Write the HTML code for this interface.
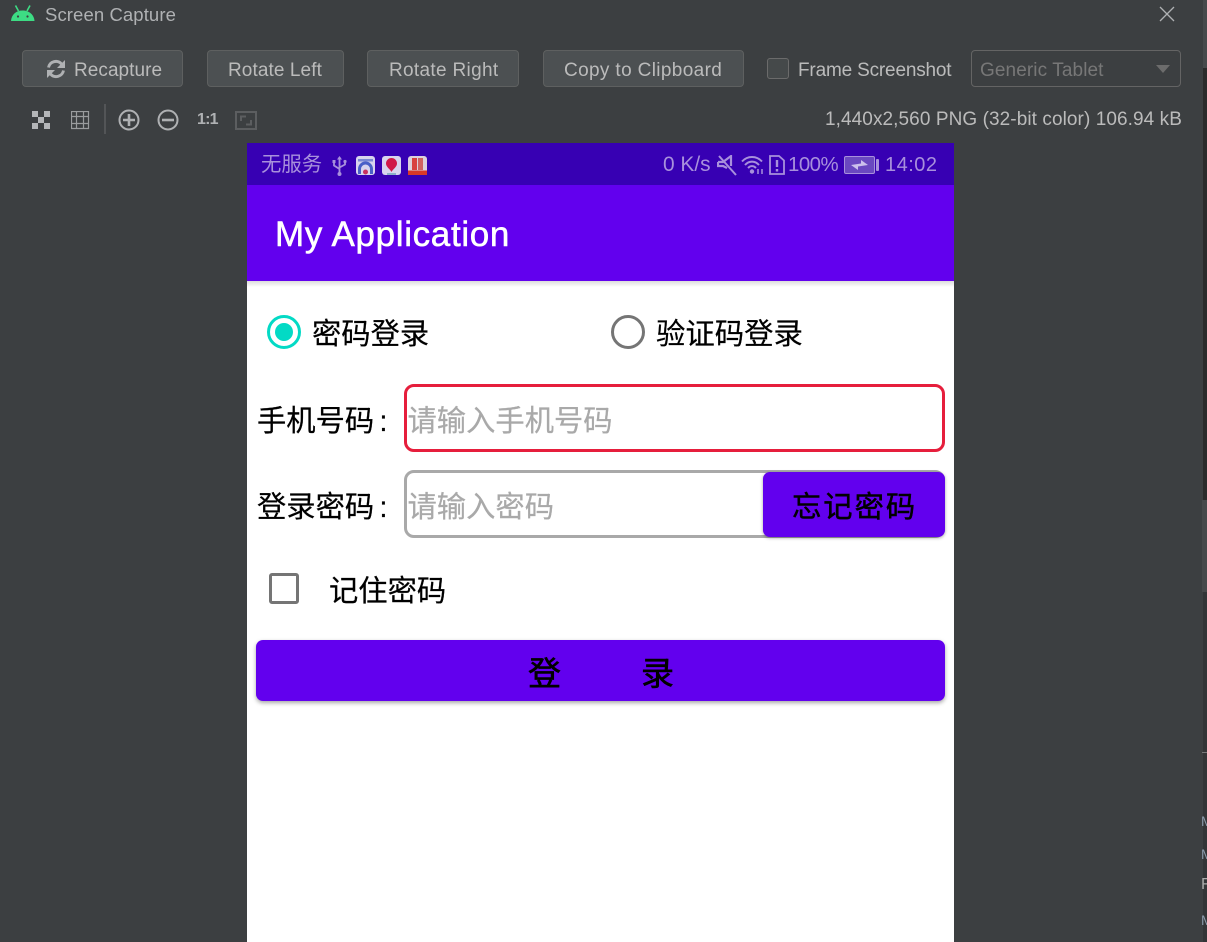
<!DOCTYPE html>
<html><head><meta charset="utf-8">
<style>
html,body{margin:0;padding:0;background:#3c3f41}
#r{position:relative;width:1207px;height:942px;overflow:hidden;background:#3c3f41;font-family:"Liberation Sans",sans-serif}
#r div,#r svg,#r span{position:absolute;box-sizing:border-box}
.t{white-space:nowrap;color:#bbbbbb;font-size:19px;line-height:24px}
.b{top:50px;height:37px;background:#4c5052;border:1px solid #5e6060;border-radius:4px}
.c{font-family:"Liberation Sans","Noto Sans CJK SC",sans-serif;white-space:nowrap;color:#000;font-size:29.300px;line-height:40px;-webkit-text-stroke:.2px currentColor}
.g{color:#a9a9a9}
</style></head><body>
<div id="r">
<!-- right edge strip -->
<div style="left:1203px;top:0;width:4px;height:942px;background:#333537"></div>
<div style="left:1203px;top:0;width:4px;height:68px;background:#474a4c"></div>
<div style="left:1203px;top:68px;width:4px;height:502px;background:#2b2b2b"></div>
<div style="left:1202px;top:500px;width:5px;height:92px;background:#47494b"></div>
<div style="left:1202px;top:752px;width:5px;height:1px;background:#77797a"></div>
<div class="t" style="left:1201px;top:809px;font-size:14px;color:#8a9aaa">M</div>
<div class="t" style="left:1201px;top:842px;font-size:14px;color:#8a9aaa">M</div>
<div class="t" style="left:1201px;top:873px;font-size:16px;color:#aaa">F</div>
<div class="t" style="left:1201px;top:908px;font-size:14px;color:#8a9aaa">M</div>

<!-- title -->
<svg style="left:10px;top:4px" width="26" height="18" viewBox="0 0 26 18"><path d="M1 17C1.500 10.500 6 6.500 12.500 6.500S24 10.500 24.500 17Z" fill="#3ddc84"/><path d="M5.500 1.500L8.500 7M20 1.500L17 7" stroke="#3ddc84" stroke-width="1.600" fill="none"/><circle cx="8" cy="12.500" r="1.100" fill="#3c3f41"/><circle cx="17.500" cy="12.500" r="1.100" fill="#3c3f41"/></svg>
<div class="t" style="left:45px;top:3px;font-size:18.500px;color:#afb1b3;letter-spacing:.1px">Screen Capture</div>
<svg style="left:1158px;top:5px" width="18" height="18"><path d="M2 2L16 16M16 2L2 16" stroke="#afb1b3" stroke-width="1.300" fill="none"/></svg>

<!-- toolbar -->
<div class="b" style="left:22px;width:161px"></div>
<svg style="left:46px;top:59px" width="20" height="20" viewBox="0 0 20 20"><path d="M2.500 8.500A7.500 7.500 0 0 1 15.500 5L17.500 7M17.500 11.500A7.500 7.500 0 0 1 4.500 15L2.500 13" stroke="#afb1b3" stroke-width="2.900" fill="none"/><path d="M19 1V9H11ZM1 19V11H9Z" fill="#afb1b3"/></svg>
<div class="t" style="left:74px;top:59px;letter-spacing:.05px">Recapture</div>
<div class="b" style="left:207px;width:137px"></div>
<div class="t" style="left:228px;top:59px;letter-spacing:.09px">Rotate Left</div>
<div class="b" style="left:367px;width:152px"></div>
<div class="t" style="left:389px;top:59px;letter-spacing:.32px">Rotate Right</div>
<div class="b" style="left:543px;width:201px"></div>
<div class="t" style="left:564px;top:59px;letter-spacing:.36px">Copy to Clipboard</div>
<div style="left:767px;top:58px;width:22px;height:21px;background:#45494a;border:1px solid #6b6b6b;border-radius:3px"></div>
<div class="t" style="left:798px;top:59px;letter-spacing:-.18px">Frame Screenshot</div>
<div style="left:971px;top:50px;width:210px;height:37px;border:1px solid #646464;border-radius:4px"></div>
<div class="t" style="left:980px;top:59px;color:#777777;letter-spacing:.1px">Generic Tablet</div>
<svg style="left:1156px;top:65px" width="15" height="9"><path d="M0 0H14L7 8Z" fill="#6c6c6c"/></svg>

<!-- icon row -->
<svg style="left:32px;top:111px" width="19" height="19"><path d="M0 0H6V6H0ZM12 0H18V6H12ZM6 6H12V12H6ZM0 12H6V18H0ZM12 12H18V18H12Z" fill="#b4b6b8"/></svg>
<svg style="left:71px;top:111px" width="19" height="19"><path d="M.5.500H17.500V17.500H.5ZM.5 5.500H17.500M.5 12.500H17.500M5.500.500V17.500M12.500.500V17.500" stroke="#9a9c9e" stroke-width="1.200" fill="none"/></svg>
<div style="left:104px;top:104px;width:2px;height:30px;background:#535557"></div>
<svg style="left:118px;top:109px" width="22" height="22"><circle cx="11" cy="11" r="9.500" stroke="#afb1b3" stroke-width="2" fill="none"/><path d="M5 11H17M11 5V17" stroke="#afb1b3" stroke-width="2.600"/></svg>
<svg style="left:157px;top:109px" width="22" height="22"><circle cx="11" cy="11" r="9.500" stroke="#afb1b3" stroke-width="2" fill="none"/><path d="M5 11H17" stroke="#afb1b3" stroke-width="2.600"/></svg>
<div class="t" style="left:197px;top:108px;font-size:16px;font-weight:bold;color:#afb1b3;letter-spacing:-.8px">1:1</div>
<svg style="left:235px;top:111px" width="22" height="19"><path d="M1 1H21V18H1Z" stroke="#5c5e60" stroke-width="2" fill="none"/><path d="M6 10V5.500H11M16 9V13.500H11" stroke="#5c5e60" stroke-width="2" fill="none"/></svg>
<div class="t" style="left:825px;top:108px;letter-spacing:.08px">1,440x2,560 PNG (32-bit color) 106.94 kB</div>

<!-- phone -->
<div style="left:247px;top:143px;width:707px;height:799px;background:#fff"></div>
<div style="left:247px;top:143px;width:707px;height:42px;background:#3700b3"></div>
<div style="left:247px;top:281px;width:707px;height:6px;background:linear-gradient(#dcdcdc,#fff)"></div>
<div style="left:247px;top:185px;width:707px;height:96px;background:#6200ee"></div>

<!-- status bar -->
<div class="c" style="left:261px;top:146px;font-size:20.400px;line-height:38px;color:#a890dc;-webkit-text-stroke:0">无服务</div>
<svg style="left:332px;top:156px" width="15" height="20"><path d="M7.500 1V19M2 6V9.500L7.500 13M13 6V8.500L7.500 11.500" stroke="#a890dc" stroke-width="1.800" fill="none"/><path d="M7.500 0L10 3.500H5Z" fill="#a890dc"/><rect x=".5" y="4" width="3" height="3" fill="#a890dc"/><circle cx="13" cy="5.500" r="1.600" fill="#a890dc"/><circle cx="7.500" cy="18" r="2" fill="#a890dc"/></svg>
<div style="left:356px;top:156px;width:19px;height:19px;background:#d8d4ee;border-radius:3px"></div>
<svg style="left:356px;top:156px" width="19" height="19"><path d="M2 18V13A7.500 7.500 0 0 1 17 13V18H14V13A4.500 4.500 0 0 0 5 13V18Z" fill="#4a60c8"/><circle cx="9.500" cy="16" r="2.500" fill="#c83060"/><rect x="2" y="3" width="15" height="2.500" fill="#7a88d4"/></svg>
<div style="left:382px;top:156px;width:19px;height:19px;background:#d8d4ee;border-radius:3px"></div>
<svg style="left:382px;top:156px" width="19" height="19"><path d="M9.500 2A5.500 5.500 0 0 1 15 7.500C15 11 11 13 9.500 16C8 13 4 11 4 7.500A5.500 5.500 0 0 1 9.500 2Z" fill="#d01848"/><rect x="5" y="17" width="9" height="2" fill="#8cb0c8"/></svg>
<div style="left:408px;top:156px;width:19px;height:19px;background:#ddd0dc;border-radius:3px"></div>
<svg style="left:408px;top:156px" width="19" height="19"><rect x="4" y="2" width="5" height="12" fill="#d84040"/><rect x="10" y="2" width="5" height="12" fill="#d06060"/><rect x="0" y="14.500" width="19" height="4.500" fill="#d83828"/></svg>
<div class="t" style="left:663px;top:153px;font-size:20.900px;color:#a890dc">0 K/s</div>
<svg style="left:717px;top:155px" width="20" height="21"><path d="M1 7H6L14 1V11M10 13L6 11H1V7" stroke="#a890dc" stroke-width="2.200" fill="none"/><path d="M2 1L19 20" stroke="#a890dc" stroke-width="2" fill="none"/></svg>
<svg style="left:741px;top:155px" width="24" height="20"><path d="M1 6.500C6.500 .500 15.500 .500 21 6.500M4 10C8 5.500 14 5.500 18 10M7 13C9.500 10.500 12.500 10.500 15 13" stroke="#a890dc" stroke-width="2" fill="none"/><circle cx="11" cy="16.500" r="2.200" fill="#a890dc"/><path d="M17 14V19M21 14V19" stroke="#a890dc" stroke-width="1.500"/></svg>
<svg style="left:769px;top:155px" width="16" height="20"><path d="M1 1H10L15 5.500V19H1Z" stroke="#a890dc" stroke-width="1.800" fill="none"/><path d="M8 5V12M8 14V16.500" stroke="#a890dc" stroke-width="2.400"/></svg>
<div class="t" style="left:788px;top:153px;font-size:20.400px;color:#a890dc;letter-spacing:-.5px">100%</div>
<div style="left:844px;top:156px;width:31px;height:18px;border:1px solid #a890dc;border-radius:2px;background:#6a48c0"></div>
<div style="left:876px;top:159px;width:3px;height:12px;background:#a890dc;border-radius:1px"></div>
<svg style="left:851px;top:160px" width="17" height="10"><path d="M0 5L10 3.500L10 0L17 5L7 6.500L7 10Z" fill="#ccc0ec"/></svg>
<div class="t" style="left:885px;top:153px;font-size:20px;color:#a890dc;letter-spacing:.5px">14:02</div>

<!-- app bar -->
<div class="t" style="left:275px;top:215px;font-size:35px;line-height:40px;color:#fff;letter-spacing:.67px;-webkit-text-stroke:.5px #fff">My Application</div>

<!-- radios -->
<div style="left:267px;top:315px;width:34px;height:34px;border:3.500px solid #03dac5;border-radius:50%"></div>
<div style="left:275px;top:323px;width:18px;height:18px;background:#03dac5;border-radius:50%"></div>
<div class="c" style="left:312px;top:315px">密码登录</div>
<div style="left:611px;top:315px;width:34px;height:34px;border:3.500px solid #757575;border-radius:50%"></div>
<div class="c" style="left:656px;top:315px;font-size:29.400px">验证码登录</div>

<!-- phone input -->
<div class="c" style="left:257px;top:402px;word-spacing:-3px">手机号码 :</div>
<div style="left:404px;top:384px;width:541px;height:68px;border:3px solid #e61e3c;border-radius:10px"></div>
<div class="c g" style="left:407.500px;top:402px">请输入手机号码</div>

<!-- password input -->
<div class="c" style="left:257px;top:488px;word-spacing:-3px">登录密码 :</div>
<div style="left:404px;top:470px;width:541px;height:68px;border:3px solid #a9a9a9;border-radius:10px"></div>
<div class="c g" style="left:407.500px;top:488px">请输入密码</div>
<div style="left:763px;top:472px;width:182px;height:65px;background:#6200ee;border-radius:7px;box-shadow:0 1px 3px rgba(0,0,0,.35)"></div>
<div class="c" style="left:792px;top:488px;letter-spacing:2px;-webkit-text-stroke:.5px #000">忘记密码</div>

<!-- remember -->
<div style="left:268.600px;top:573.400px;width:30.500px;height:30.500px;border:3.500px solid #757575;border-radius:3px"></div>
<div class="c" style="left:329px;top:572px">记住密码</div>

<!-- login -->
<div style="left:256px;top:640px;width:689px;height:61px;background:#6200ee;border-radius:7px;box-shadow:0 2px 4px rgba(0,0,0,.35)"></div>
<div class="c" style="left:528px;top:654px;font-size:33px;-webkit-text-stroke:.6px #000">登</div>
<div class="c" style="left:641px;top:654px;font-size:33px;-webkit-text-stroke:.6px #000">录</div>
</div>
</body></html>
